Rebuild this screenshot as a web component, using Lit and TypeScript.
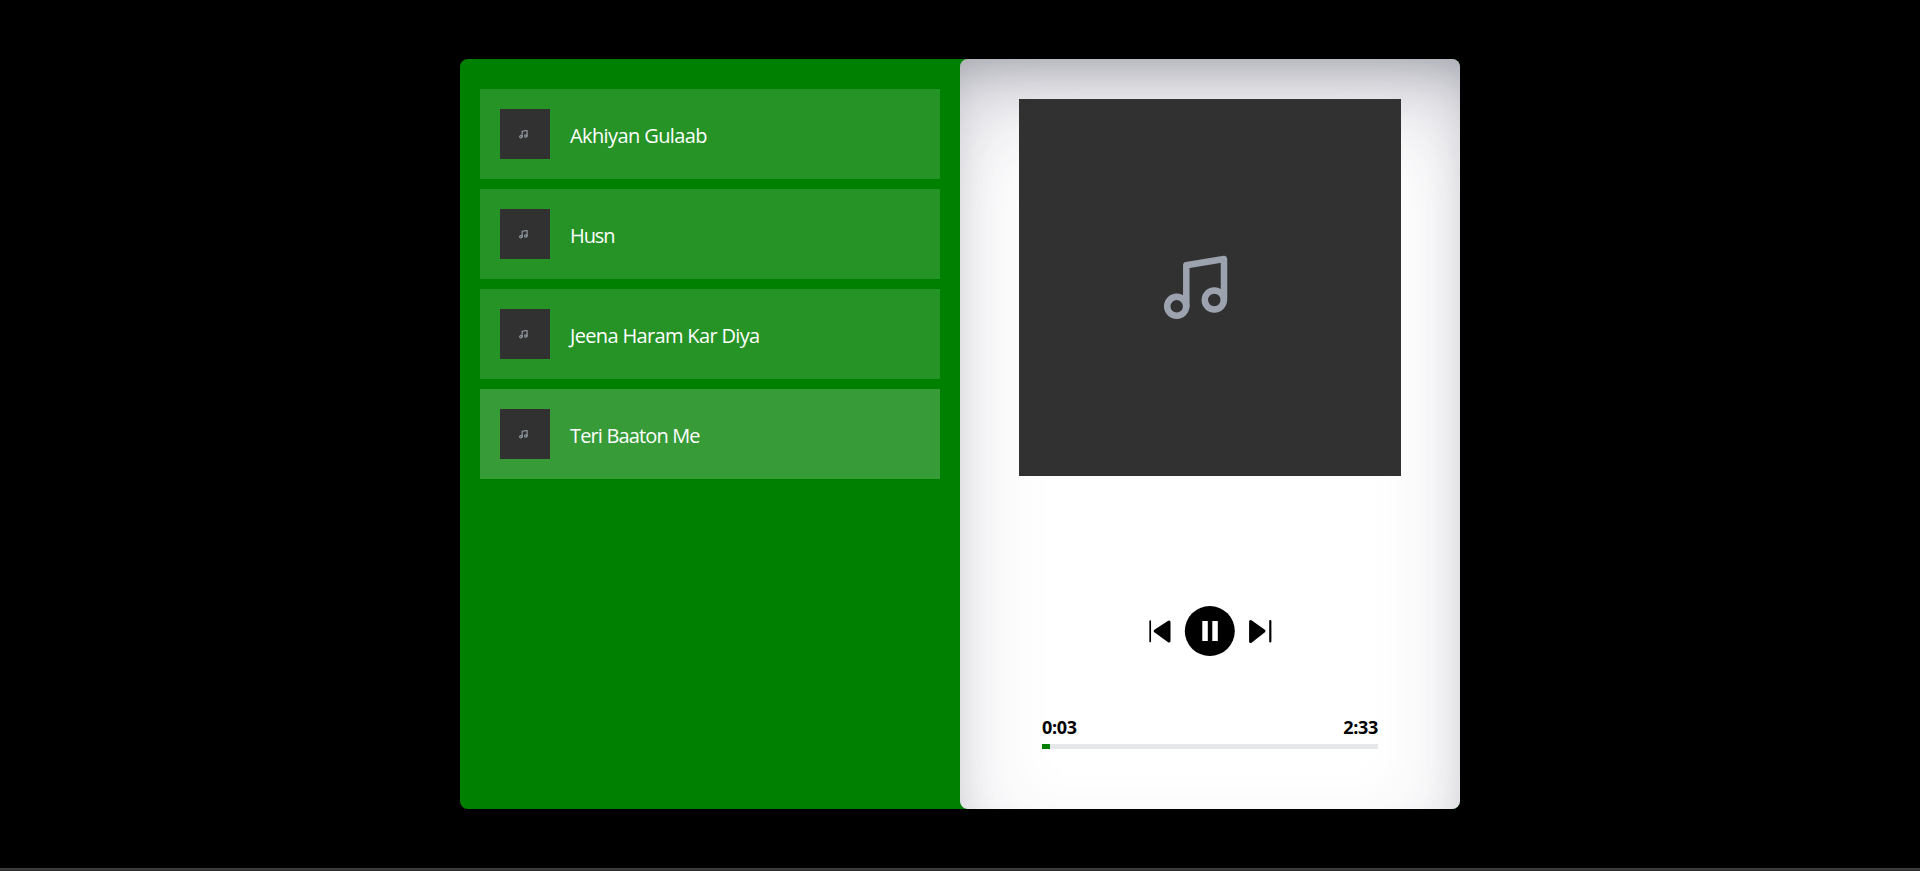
import { LitElement, html, css, svg } from "lit";
import { customElement, state } from "lit/decorators.js";

const note = svg`<g class="note" fill="none" stroke="#9ca3af" stroke-linejoin="round" stroke-linecap="round">
  <circle cx="12.700" cy="50.300" r="9.500"/><circle cx="50.300" cy="44" r="9.500"/>
  <path d="M22.300 50.300V9.300L60 3V44"/></g>`;

@customElement("app-root")
export class AppRoot extends LitElement {
  static styles = css`
    :host { display: block; font-family: "Segoe UI", "Open Sans", "Noto Sans", sans-serif; }
    * { box-sizing: border-box; }
    .page { height: 871px; background: linear-gradient(#444, #2a2a2a) bottom / 100% 3px no-repeat #000; padding-top: 59px; overflow: hidden; }
    .player { width: 1000px; height: 750px; margin: 0 auto; display: grid; grid-template-columns: 1fr 1fr; background: green; border-radius: 8px; }
    .list { padding: 30px 20px; display: flex; flex-direction: column; gap: 10px; }
    .song { height: 90px; padding: 20px; display: flex; align-items: center; gap: 20px; color: #fff; background: rgba(255,255,255,.15); font-size: 20px; line-height: 30px; }
    .song.active { background: rgba(255,255,255,.215); }
    .title { padding-top: 3px; white-space: nowrap; }
    .thumb { width: 50px; height: 50px; background: #313131; display: block; }
    .note { stroke-width: 6.5px; }
    .thumb .note { stroke-width: 8px; }
    .now { border-radius: 8px; background: #fff; box-shadow: inset 0 50px 100px -20px rgba(50,50,93,.25), inset 0 30px 60px -30px rgba(0,0,0,.3); display: flex; flex-direction: column; align-items: center; padding-top: 40px; }
    .cover { width: 382px; height: 377px; background: #313131; display: block; }
    .controls { display: block; margin-top: 130px; width: 124px; height: 50px; }
    .times { width: 336px; margin-top: 59px; height: 24px; display: flex; justify-content: space-between; font-size: 18px; letter-spacing: -.3px; line-height: 24px; font-weight: 700; color: #000; }
    .track { width: 336px; height: 5px; margin-top: 5px; background: #e5e7eb; }
    .fill { height: 5px; background: green; }
  `;
  @state() songs = [
    { title: "Akhiyan Gulaab", tracking: -0.6 },
    { title: "Husn", tracking: -1.1 },
    { title: "Jeena Haram Kar Diya", tracking: -0.66 },
    { title: "Teri Baaton Me", tracking: -0.85 },
  ];
  @state() active = 3;
  @state() progress = 2.4;
  render() {
    return html`<div class="page"><main class="player">
      <section class="list">${this.songs.map((s, i) => html`
        <div class="song ${i === this.active ? "active" : ""}">
          <svg class="thumb" viewBox="-147 -159 382 377" preserveAspectRatio="none">${note}</svg>
          <span class="title" style="letter-spacing:${s.tracking}px">${s.title}</span></div>`)}
      </section>
      <section class="now">
        <svg class="cover" viewBox="-145 -157 382 377">${note}</svg>
        <svg class="controls" viewBox="0 0 124 50">
          <circle cx="61.800" cy="25" r="25"/><path fill="#fff" d="M54.300 15h5.500v20h-5.500zM64.300 15h5.500v20h-5.500z"/>
          <path d="M2.200 15v20.500" stroke="#000" stroke-width="1.700" stroke-linecap="round"/>
          <path d="M7.200 25L21 16v19z" stroke="#000" stroke-width="3" stroke-linejoin="round"/>
          <path d="M116 25L102.600 15.500v20z" stroke="#000" stroke-width="3" stroke-linejoin="round"/>
          <path d="M122.300 15v20.500" stroke="#000" stroke-width="2.200" stroke-linecap="round"/>
        </svg>
        <div class="times"><span>0:03</span><span>2:33</span></div>
        <div class="track"><div class="fill" style="width:${this.progress}%"></div></div>
      </section>
    </main></div>`;
  }
}
